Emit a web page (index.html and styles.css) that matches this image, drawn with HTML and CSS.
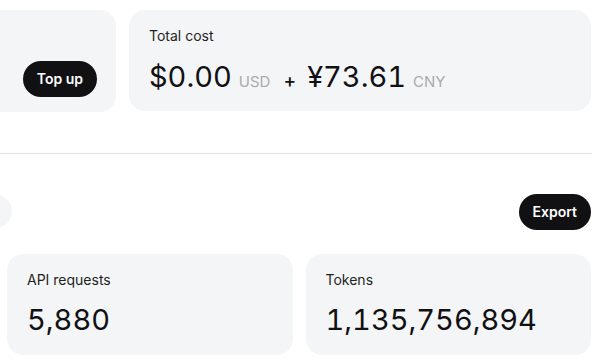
FILE: index.html
```html
<!DOCTYPE html>
<html>
<head>
<meta charset="utf-8">
<link rel="stylesheet" href="styles.css">
</head>
<body>
<div class="page">
  <div class="top-row">
    <div class="card balance-card">
      <button class="btn">Top up</button>
    </div>
    <div class="card cost-card">
      <div class="label">Total cost</div>
      <div class="value-row">
        <span class="value">$0.00</span><span class="unit">USD</span>
        <span class="plus">+</span>
        <span class="value">¥73.61</span><span class="unit">CNY</span>
      </div>
    </div>
  </div>
  <div class="divider"></div>
  <div class="toolbar">
    <div class="tab-pill"></div>
    <button class="btn">Export</button>
  </div>
  <div class="stats">
    <div class="card">
      <div class="label">API requests</div>
      <div class="value">5,880</div>
    </div>
    <div class="card">
      <div class="label">Tokens</div>
      <div class="value">1,135,756,894</div>
    </div>
  </div>
</div>
</body>
</html>
```
FILE: styles.css
```css
* { box-sizing: border-box; }
html, body { margin: 0; padding: 0; background: #fff; overflow: hidden; }
body {
  font-family: Inter, "Liberation Sans", sans-serif;
  color: #18181b;
  width: 600px;
  height: 363px;
}
.page {
  padding: 10px 9px 0 7px;
}
.card {
  background: #f4f5f7;
  border-radius: 16px;
  padding: 16px 20px;
}
.top-row {
  display: flex;
  gap: 13px;
}
.balance-card {
  width: 137px;
  margin-left: -28px;
  display: flex;
  justify-content: flex-end;
  align-items: flex-end;
  padding: 16px 19px 15px 20px;
  height: 102px;
}
.cost-card {
  flex: 1;
  height: 101px;
}
.label {
  font-size: 14px;
  line-height: 20px;
  color: #1f1f22;
}
.value-row {
  margin-top: 13px;
  display: flex;
  align-items: baseline;
  height: 36px;
}
.value {
  font-size: 29px;
  line-height: 36px;
  color: #111113;
  font-variant-numeric: tabular-nums;
  font-feature-settings: "tnum" 1;
}
.unit {
  font-size: 15px;
  color: #ababab;
  margin-left: 7px;
}
.plus {
  font-size: 19px;
  font-weight: 500;
  margin: 0 11px 0 13px;
  color: #111;
}
.btn {
  font-family: Inter, "Liberation Sans", sans-serif;
  background: #111113;
  color: #fff;
  border: none;
  border-radius: 999px;
  height: 36px;
  padding: 0 14px;
  font-size: 14px;
  font-weight: 600;
  line-height: 36px;
}
.divider {
  height: 1px;
  background: #e3e3e3;
  margin: 41px -7px 0 -7px;
  width: 592px;
}
.toolbar {
  margin-top: 40px;
  display: flex;
  justify-content: space-between;
  align-items: center;
  height: 35px;
}
.tab-pill {
  width: 40px;
  height: 33px;
  margin-left: -35px;
  background: #f4f5f7;
  border-radius: 999px;
}
.stats {
  margin-top: 25px;
  display: grid;
  grid-template-columns: 1fr 1fr;
  gap: 13px;
}
.stats .card {
  height: 101px;
}
.stats .value {
  margin-top: 12px;
}
```
